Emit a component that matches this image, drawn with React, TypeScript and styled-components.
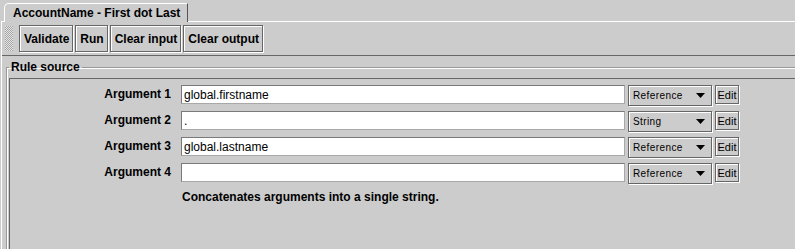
import { Fragment } from "react";
import styled, { createGlobalStyle } from "styled-components";

const GlobalStyle = createGlobalStyle`
  html, body {
    margin: 0;
    padding: 0;
    background: #cccccc;
  }
  body {
    font-family: "Liberation Sans", Arial, sans-serif;
    font-size: 12px;
    color: #000;
  }
`;

const Window = styled.div`
  width: 795px;
  height: 249px;
  overflow: hidden;
  background: #cccccc;
`;

const Frame = styled.div`
  width: 830px;
  padding-left: 1px;
`;

const TabStrip = styled.div`
  display: flex;
  align-items: flex-end;
  height: 22px;
`;

const TabGap = styled.div<{ $grow?: boolean }>`
  flex: ${(p) => (p.$grow ? 1 : "0 0 3px")};
  border-bottom: 1px solid #ffffff;
`;

const Tab = styled.div`
  height: 19px;
  box-sizing: border-box;
  display: flex;
  align-items: center;
  padding: 0 7px 0 8px;
  border-top: 1px solid #ffffff;
  border-left: 1px solid #ffffff;
  border-right: 1px solid #555555;
  border-top-left-radius: 5px;
  font-weight: bold;
  font-size: 12px;
  white-space: nowrap;
`;

const TabPane = styled.div`
  border-left: 1px solid #ffffff;
`;

const Toolbar = styled.div`
  display: flex;
  align-items: center;
  gap: 2px;
  height: 33px;
  padding-left: 3px;
  border-bottom: 1px solid #666666;
`;

const Grip = styled.div`
  width: 8px;
  height: 25px;
  margin-right: 4px;
  background: repeating-conic-gradient(#a4a4a4 0 25%, #e6e6e6 0 50%) 0 0 / 2px 2px;
`;

const ToolButton = styled.button`
  height: 27px;
  box-sizing: border-box;
  padding: 0 3px 0 4px;
  background: #cccccc;
  border: 1px solid #666666;
  box-shadow: inset 1px 1px #ffffff, 1px 1px #ffffff;
  font-family: inherit;
  font-weight: bold;
  font-size: 12px;
  color: #000;
`;

const Titled = styled.fieldset`
  margin: 4px 0 0 4px;
  padding: 0;
  border: 1px solid #999999;
  border-right: none;
  border-bottom: none;
  box-shadow: inset 1px 1px #ffffff;
  min-height: 200px;
`;

const Legend = styled.legend`
  margin-left: 2px;
  padding: 0 2px;
  font-weight: bold;
  font-size: 12px;
  line-height: 14px;
`;

const InnerPanel = styled.div`
  margin: 4px 0 0 2px;
  padding-top: 6px;
  border-top: 1px solid #666666;
  border-left: 1px solid #666666;
  min-height: 180px;
  display: grid;
  grid-template-columns: 168px 444px 84px 24px;
  column-gap: 3px;
  row-gap: 5px;
  align-items: start;
  align-content: start;
`;

const Label = styled.div`
  height: 19px;
  line-height: 19px;
  text-align: right;
  padding-right: 7px;
  font-weight: bold;
  font-size: 12px;
  white-space: nowrap;
`;

const Field = styled.input`
  height: 19px;
  box-sizing: border-box;
  width: 100%;
  margin: 0;
  padding: 0 2px;
  background: #ffffff;
  border: 1px solid #7a7a7a;
  border-right-color: #a8a8a8;
  border-bottom-color: #a8a8a8;
  font-family: inherit;
  font-size: 12px;
  color: #000;
  outline: none;
`;

const Combo = styled.div`
  height: 21px;
  box-sizing: border-box;
  display: flex;
  align-items: center;
  justify-content: space-between;
  padding: 0 6px 0 4px;
  border: 1px solid #666666;
  box-shadow: inset 1px 1px #ffffff, 1px 1px #ffffff;
  font-size: 10px;
  letter-spacing: 0.4px;
`;

const EditButton = styled.button`
  height: 19px;
  width: 24px;
  box-sizing: border-box;
  margin: 0;
  padding: 0;
  background: #cccccc;
  border: 1px solid #666666;
  box-shadow: inset 1px 1px #ffffff, 1px 1px #ffffff;
  font-family: inherit;
  font-size: 11px;
  color: #000;
`;

const Description = styled.div`
  grid-column: 2 / span 3;
  padding-left: 1px;
  line-height: 14px;
  margin-top: 1px;
  font-weight: bold;
  font-size: 12px;
`;

const Arrow = () => (
  <svg width="9" height="5" viewBox="0 0 9 5">
    <polygon points="0,0 9,0 4.5,5" fill="#000" />
  </svg>
);

const args = [
  { value: "global.firstname", type: "Reference" },
  { value: ".", type: "String" },
  { value: "global.lastname", type: "Reference" },
  { value: "", type: "Reference" },
];

export default function App() {
  return (
    <Window>
      <GlobalStyle />
      <Frame>
        <TabStrip>
          <TabGap />
          <Tab>AccountName - First dot Last</Tab>
          <TabGap $grow />
        </TabStrip>
        <TabPane>
          <Toolbar>
            <Grip />
            <ToolButton>Validate</ToolButton>
            <ToolButton>Run</ToolButton>
            <ToolButton>Clear input</ToolButton>
            <ToolButton>Clear output</ToolButton>
          </Toolbar>
          <Titled>
            <Legend>Rule source</Legend>
            <InnerPanel>
              {args.map((a, i) => (
                <Fragment key={i}>
                  <Label>Argument {i + 1}</Label>
                  <Field defaultValue={a.value} readOnly />
                  <Combo>
                    <span>{a.type}</span>
                    <Arrow />
                  </Combo>
                  <EditButton>Edit</EditButton>
                </Fragment>
              ))}
              <Description>Concatenates arguments into a single string.</Description>
            </InnerPanel>
          </Titled>
        </TabPane>
      </Frame>
    </Window>
  );
}
